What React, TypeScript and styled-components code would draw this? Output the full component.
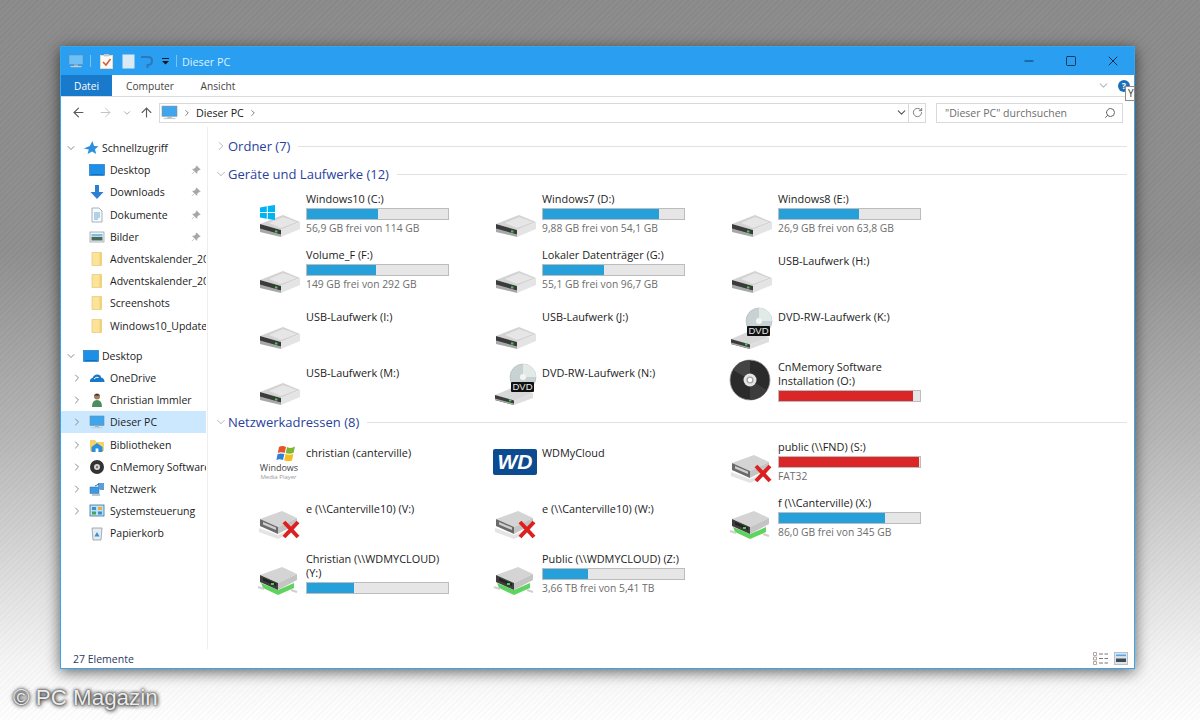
import React from 'react';
import styled, { createGlobalStyle } from 'styled-components';
import { ArrowLeft, ArrowRight, ArrowUp, ChevronDown, ChevronRight, RotateCw, Search, Minus, Square, X } from 'lucide-react';

const GlobalStyle = createGlobalStyle`
  html, body { margin: 0; padding: 0; }
  body { font-family: "Open Sans", "Noto Sans", sans-serif; }
  * { box-sizing: border-box; }
`;

const Page = styled.div`
  position: relative;
  width: 1200px;
  height: 720px;
  overflow: hidden;
  padding: 46px 65px 51px 60px;
  background:
    repeating-linear-gradient(135deg, rgba(255,255,255,.02) 0 2px, rgba(0,0,0,.02) 2px 4px),
    linear-gradient(180deg, #8b8b8b 0%, #8f8f8f 35%, #b4b4b4 60%, #dcdcdc 80%, #f6f6f6 92%, #ffffff 100%);
`;

const Watermark = styled.div`
  position: absolute;
  left: 13px;
  top: 683px;
  font-family: "Liberation Sans", Arial, sans-serif;
  font-size: 22.4px;
  line-height: 30px;
  color: #ececec;
  text-shadow: 0 0 2px #333, 0 0 4px #444, 1px 1px 4px #444;
`;

const Window = styled.div`
  position: relative;
  height: 623px;
  display: flex;
  flex-direction: column;
  background: #fff;
  border: 1px solid #36a6ef;
  box-shadow: 0 3px 14px rgba(0,0,0,.6);
`;

const TitleBar = styled.div`
  height: 28px;
  flex: none;
  display: flex;
  align-items: center;
  background: #2a9ff2;
  padding-left: 6px;
`;

const QuickIcon = styled.span<{ $w: number; $ml?: number }>`
  width: ${p => p.$w}px;
  margin-left: ${p => p.$ml || 0}px;
  display: flex;
  justify-content: center;
  align-items: center;
`;

const TitleSep = styled.span<{ $ml: number; $mr: number }>`
  width: 1px;
  height: 12px;
  background: #7cc3f6;
  margin: 0 ${p => p.$mr}px 0 ${p => p.$ml}px;
`;

const TitleText = styled.span`
  font-size: 10.8px;
  color: #dff1ff;
`;

const WindowButtons = styled.div`
  margin-left: auto;
  display: flex;
  color: #0d1e2e;
`;

const WindowButton = styled.span`
  width: 42px;
  height: 28px;
  display: flex;
  align-items: center;
  justify-content: center;
`;

const TabRow = styled.div`
  height: 22px;
  flex: none;
  display: flex;
  align-items: stretch;
  border-bottom: 1px solid #dadbdc;
  position: relative;
`;

const Tab = styled.div<{ $active?: boolean; $w: number }>`
  width: ${p => p.$w}px;
  display: flex;
  align-items: center;
  justify-content: center;
  font-size: 10.2px;
  background: ${p => (p.$active ? '#1979ca' : 'transparent')};
  color: ${p => (p.$active ? '#ffffff' : '#444444')};
`;

const RibbonRight = styled.div`
  margin-left: auto;
  display: flex;
  align-items: center;
  gap: 8px;
  padding-right: 4px;
  color: #b9b9b9;
`;

const HelpDot = styled.span`
  width: 12px;
  height: 12px;
  border-radius: 50%;
  background: #1b6fb8;
  color: #fff;
  font-size: 9px;
  font-weight: 700;
  line-height: 12px;
  text-align: center;
`;

const Tooltip = styled.div`
  position: absolute;
  right: -1px;
  top: 11px;
  width: 10px;
  height: 15px;
  background: #fbfbfb;
  border: 1px solid #8c8c8c;
  font-size: 10px;
  line-height: 13px;
  padding-left: 2px;
  color: #333;
  overflow: hidden;
`;

const AddressRow = styled.div`
  height: 30px;
  flex: none;
  display: flex;
  align-items: center;
  padding-top: 1px;
`;

const NavButton = styled.span<{ $w: number; $color: string }>`
  width: ${p => p.$w}px;
  display: flex;
  justify-content: center;
  color: ${p => p.$color};
`;

const NavButtons = styled.div`
  display: flex;
  align-items: center;
  padding-left: 3px;
  width: 98px;
`;

const AddressBox = styled.div`
  width: 767px;
  height: 20px;
  display: flex;
  align-items: center;
  border: 1px solid #d9d9d9;
  font-size: 10.7px;
  color: #1a1a1a;
  padding-left: 1px;
`;

const Crumb = styled.span`
  margin: 0 4px;
  display: flex;
  color: #666;
`;

const AddressEnd = styled.span`
  margin-left: auto;
  display: flex;
  align-items: center;
  height: 100%;
  color: #555;
`;

const RefreshCell = styled.span`
  width: 17px;
  height: 100%;
  margin-left: 0;
  display: flex;
  align-items: center;
  justify-content: center;
  border-left: 1px solid #d9d9d9;
  color: #666;
`;

const FlippedSearch = styled(Search)`
  transform: scaleX(-1);
`;

const SearchBox = styled.div`
  width: 187px;
  height: 20px;
  margin-left: 10px;
  display: flex;
  align-items: center;
  justify-content: space-between;
  border: 1px solid #d9d9d9;
  padding: 0 6px 0 8px;
  font-size: 10.5px;
  color: #6d6d6d;
`;

const Main = styled.div`
  flex: 1;
  min-height: 0;
  display: flex;
`;

const Sidebar = styled.nav`
  width: 147px;
  flex: none;
  padding-top: 10px;
  border-right: 1px solid #eeeeee;
  overflow: hidden;
`;

const NavGroup = styled.div`
  margin-bottom: 8px;
`;

const NavRow = styled.div<{ $selected?: boolean; $indent: number }>`
  height: 22.2px;
  width: 145px;
  display: flex;
  align-items: center;
  padding-left: ${p => p.$indent}px;
  font-size: 10.5px;
  color: #1c1c1c;
  white-space: nowrap;
  overflow: hidden;
  background: ${p => (p.$selected ? '#cce8ff' : 'transparent')};
`;

const Twisty = styled.span<{ $w: number }>`
  width: ${p => p.$w}px;
  flex: none;
  display: flex;
  justify-content: center;
  color: #8a8a8a;
`;

const NavIcon = styled.span<{ $ml: number; $mr: number }>`
  width: 16px;
  height: 16px;
  flex: none;
  margin-left: ${p => p.$ml}px;
  margin-right: ${p => p.$mr}px;
  display: flex;
  align-items: center;
  justify-content: center;
`;

const NavLabel = styled.span`
  flex: 1;
  min-width: 0;
  overflow: hidden;
`;

const PinSlot = styled.span`
  width: 16px;
  flex: none;
  margin-right: 2px;
  display: flex;
  justify-content: center;
`;

const Content = styled.main`
  flex: 1;
  min-width: 0;
  padding: 6px 7px 0 6px;
`;

const SectionHeader = styled.div<{ $gap?: number }>`
  height: 24px;
  margin-top: ${p => p.$gap || 0}px;
  display: flex;
  align-items: center;
  font-size: 13px;
  color: #2a3f9e;
  white-space: nowrap;
`;

const SectionChevron = styled.span`
  width: 14px;
  display: flex;
  justify-content: center;
  color: #9a9a9a;
`;

const SectionRule = styled.span`
  flex: 1;
  height: 1px;
  margin-left: 8px;
  background: #e2e2e2;
`;

const TileGrid = styled.div`
  display: grid;
  grid-template-columns: repeat(3, 236px);
  grid-auto-rows: 56px;
  padding-left: 42px;
`;

const Tile = styled.div`
  display: flex;
  align-items: flex-start;
  gap: 2px;
`;

const TileIcon = styled.span`
  width: 48px;
  height: 48px;
  flex: none;
  margin-top: 4px;
  display: block;
`;

const TileBody = styled.div<{ $solo?: boolean }>`
  width: 143px;
  padding-top: ${p => (p.$solo ? 12 : 6)}px;
`;

const TileName = styled.div`
  font-size: 10.9px;
  line-height: 14px;
  color: #1c1c1c;
`;

const TileSub = styled.div`
  margin-top: 1px;
  font-size: 10.3px;
  line-height: 14px;
  color: #6d6d6d;
  white-space: nowrap;
`;

const Bar = styled.div`
  height: 12px;
  margin-top: 2px;
  background: #e6e6e6;
  border: 1px solid #bcbcbc;
`;

const BarFill = styled.div<{ $full?: boolean }>`
  height: 100%;
  background: ${p => (p.$full ? '#da2626' : '#26a0da')};
`;

const StatusBar = styled.div`
  height: 19px;
  flex: none;
  display: flex;
  align-items: center;
  justify-content: space-between;
  padding: 0 6px 0 12px;
  font-size: 10.5px;
  color: #2c3a66;
`;

const ViewIcons = styled.div`
  display: flex;
  gap: 5px;
`;

/* ---- drawings ---- */

const Drive = () => (
  <>
    <path d="M4 34 L27 25 L44 32 L25 40 Z" fill="#d2d2d2" />
    <path d="M13 33 L27 27 L41 32 L25 38 Z" fill="#e6e6e6" />
    <path d="M4 34 L25 40 L25 45 L4 39 Z" fill="#3b3b3b" />
    <path d="M4 38.5 L25 44.5 L25 47 L4 42 Z" fill="#a8a8a8" />
    <path d="M25 40 L44 32 L44 39 L25 47 Z" fill="#e4e4e4" />
    <rect x="19" y="40.5" width="2.4" height="2" fill="#3fd15a" />
  </>
);

const NetDrive = ({ online }: { online: boolean }) => (
  <>
    {online && (
      <>
        <path d="M5 33 L22 40 L38 33 L38 38 L22 45 L7 38 Z" fill="#5fd35f" />
        <path d="M2 37 L8 39 M35 40 L41 42" stroke="#cfcfcf" strokeWidth="2" />
      </>
    )}
    {!online && <path d="M3 34 L22 41 L38 34 L38 38 L22 45 L3 38 Z" fill="#e4e4e4" />}
    <path d="M4 25 L26 17 L41 24 L22 33 Z" fill="#d4d4d4" />
    <path d="M4 25 L22 33 L22 40 L4 32 Z" fill={online ? '#3d3d3d' : '#6a6a6a'} />
    <path d="M7 28 L20 33.5 L20 36 L7 30.5 Z" fill={online ? '#222' : '#cfcfcf'} />
    <path d="M22 33 L41 24 L41 30 L22 40 Z" fill="#c4c4c4" />
    {online && <rect x="15" y="33" width="3" height="2" fill="#3fd15a" />}
    {!online && <path d="M28 28 L42 43 M42 28 L28 43" stroke="#dc2020" strokeWidth="4" />}
  </>
);

const Disc = () => (
  <>
    <circle cx="31" cy="19" r="13" fill="#c9d2d2" />
    <circle cx="31" cy="19" r="13" fill="none" stroke="#aeb6b6" strokeWidth=".6" />
    <path d="M31 6 A13 13 0 0 1 44 19 L31 19 Z" fill="#e2eae8" />
    <circle cx="31" cy="19" r="3" fill="#f4f4f4" />
  </>
);

const TileArt = ({ kind }: { kind: string }) => (
  <svg width="48" height="48" viewBox="0 0 48 48">
    {kind === 'win' && (
      <>
        <Drive />
        <path d="M4 17.5 L10.8 16.3 V22 H4 Z M11.8 16.1 L19 15 V22 H11.8 Z M4 23 H10.8 V28.7 L4 27.5 Z M11.8 23 H19 V30 L11.8 28.9 Z" fill="#00b4f1" />
      </>
    )}
    {kind === 'hdd' && <Drive />}
    {kind === 'dvd' && (
      <>
        <Disc />
        <path d="M3 37 L22 29 L41 35 L22 43 Z" fill="#d8d8d8" />
        <path d="M3 37 L22 42.5 L22 47 L3 42 Z" fill="#3b3b3b" />
        <path d="M3 40.5 L22 45.5 L22 47 L3 42 Z" fill="#a8a8a8" />
        <path d="M22 43 L41 35 L41 40 L22 47 Z" fill="#dedede" />
        <rect x="17" y="41.4" width="2.4" height="2" fill="#3fd15a" />
        <rect x="19" y="24" width="23" height="10" rx="1" fill="#111" />
        <text x="30.5" y="32.3" textAnchor="middle" fontSize="9.5" fill="#e8e8e8" fontFamily="Liberation Sans, Arial, sans-serif">DVD</text>
      </>
    )}
    {kind === 'cd' && (
      <>
        <circle cx="22" cy="22" r="20" fill="#2b2b2b" />
        <circle cx="22" cy="22" r="20" fill="none" stroke="#9a9a9a" strokeWidth=".8" />
        <path d="M22 2 A20 20 0 0 0 5 12 L22 22 Z" fill="#444" />
        <path d="M22 42 A20 20 0 0 0 39 32 L22 22 Z" fill="#3c3c3c" />
        <circle cx="22" cy="22" r="6.5" fill="#e4e4e4" />
        <circle cx="22" cy="22" r="3.6" fill="#a4a4a4" />
        <circle cx="22" cy="22" r="2.2" fill="#fff" />
      </>
    )}
    {kind === 'off' && <NetDrive online={false} />}
    {kind === 'on' && <NetDrive online />}
    {kind === 'wmp' && (
      <>
        <path d="M23 9 Q26 7 30 9 L28.6 15 Q25 13.6 21.8 15 Z" fill="#e8512a" />
        <path d="M31 9 Q35 11 39 8.5 L37.6 14.8 Q33.6 16.6 29.8 15 Z" fill="#7cb82f" />
        <path d="M21.6 16 Q25 14.8 28.4 16 L27 22 Q23.5 20.6 20.4 22 Z" fill="#2f80d8" />
        <path d="M29.6 16 Q33.5 17.6 37.4 16 L36 22.4 Q32 24 28.2 22.2 Z" fill="#f5bd20" />
        <text x="23" y="33" textAnchor="middle" fontSize="9" fill="#444" fontFamily="Open Sans, sans-serif">Windows</text>
        <text x="22.5" y="41" textAnchor="middle" fontSize="6" fill="#9a9a9a" fontFamily="Open Sans, sans-serif">Media Player</text>
      </>
    )}
    {kind === 'wd' && (
      <>
        <rect x="1" y="11" width="44" height="26" rx="2" fill="#0d4b90" />
        <text x="23" y="31" textAnchor="middle" fontSize="21" fontWeight="700" fontStyle="italic" fill="#fff" fontFamily="Liberation Sans, Arial, sans-serif">WD</text>
      </>
    )}
  </svg>
);

const Monitor = ({ size = 16, screen = '#3fa5ec' }: { size?: number; screen?: string }) => (
  <svg width={size} height={size} viewBox="0 0 16 16">
    <rect x="1" y="2" width="14" height="9.5" fill={screen} stroke="#6d8ca6" strokeWidth=".6" />
    <rect x="6" y="11.5" width="4" height="1.6" fill="#a8b4bd" />
    <rect x="2.5" y="13" width="11" height="1.2" fill="#c6cdd2" />
  </svg>
);

const Folder = () => (
  <svg width="16" height="16" viewBox="0 0 16 16">
    <path d="M3 1.5 H12.5 V14.5 H3 Z" fill="#fbe39a" stroke="#e2c264" strokeWidth=".6" />
    <path d="M10.5 1.5 H12.5 V14.5 H10.5 Z" fill="#f2d074" />
  </svg>
);

const NavArt = ({ kind }: { kind: string }) => {
  switch (kind) {
    case 'star':
      return (
        <svg width="16" height="16" viewBox="0 0 16 16">
          <path d="M9.5 1 L11 6 L15.5 6.2 L12 9.2 L13.2 14 L9 11.4 L4.6 14 L5.8 9.6 L.8 8.6 L6.8 6 Z" fill="#2b8fe0" />
        </svg>
      );
    case 'desktop':
      return (
        <svg width="16" height="16" viewBox="0 0 16 16">
          <rect x="0.5" y="2.5" width="15" height="11" fill="#1d8fe6" stroke="#0f6db8" strokeWidth=".6" />
          <rect x="2" y="12" width="12" height=".9" fill="#0f6db8" />
        </svg>
      );
    case 'download':
      return (
        <svg width="16" height="16" viewBox="0 0 16 16">
          <path d="M6 1 H10 V8 H14.5 L8 15 L1.5 8 H6 Z" fill="#2d7fd3" />
        </svg>
      );
    case 'doc':
      return (
        <svg width="16" height="16" viewBox="0 0 16 16">
          <path d="M3 1 H10 L13 4 V15 H3 Z" fill="#f8fbfd" stroke="#8ea0ac" strokeWidth=".8" />
          <path d="M5 6 H11 M5 8 H11 M5 10 H11 M5 12 H9" stroke="#5f9ccb" strokeWidth=".9" />
        </svg>
      );
    case 'pic':
      return (
        <svg width="16" height="16" viewBox="0 0 16 16">
          <rect x="1" y="3" width="14" height="10" fill="#eef3f6" stroke="#8d9aa3" strokeWidth=".7" />
          <rect x="2.5" y="5" width="11" height="2.5" fill="#7fbde6" />
          <rect x="2.5" y="8" width="11" height="3.5" fill="#4d6a55" />
        </svg>
      );
    case 'folder':
      return <Folder />;
    case 'cloud':
      return (
        <svg width="16" height="16" viewBox="0 0 16 16">
          <path d="M1 12 Q.5 8.5 3.5 8 Q5 4 9 4.5 Q12 5 12 7.5 Q15.5 8 15.5 12 Z" fill="#1b78c8" />
          <path d="M5 9 Q7 6.5 9.5 7.5" stroke="#fff" strokeWidth="1" fill="none" />
        </svg>
      );
    case 'user':
      return (
        <svg width="16" height="16" viewBox="0 0 16 16">
          <circle cx="8" cy="4.5" r="3" fill="#a97c58" />
          <path d="M5 3.4 Q8 .2 11 3.4 Z" fill="#3c2e25" />
          <path d="M3 15 Q3 8 8 8 Q13 8 13 15 Z" fill="#4c8e5f" />
        </svg>
      );
    case 'pc':
      return <Monitor />;
    case 'lib':
      return (
        <svg width="16" height="16" viewBox="0 0 16 16">
          <path d="M1 3 H6 L7.5 5 H15 V14 H1 Z" fill="#f6d365" />
          <path d="M8 6 L13.5 10 V15 H2.5 V10 Z" fill="#2b8fe0" />
          <rect x="6.6" y="11.5" width="2.8" height="3.5" fill="#fff" />
        </svg>
      );
    case 'cd':
      return (
        <svg width="16" height="16" viewBox="0 0 16 16">
          <circle cx="8" cy="8" r="7" fill="#333" />
          <circle cx="8" cy="8" r="3" fill="#d8d8d8" />
          <circle cx="8" cy="8" r="1.2" fill="#777" />
        </svg>
      );
    case 'net':
      return (
        <svg width="16" height="16" viewBox="0 0 16 16">
          <rect x="1" y="6" width="9" height="6.5" fill="#3e9ae0" stroke="#2b6ea6" strokeWidth=".5" />
          <path d="M3 14 H11" stroke="#9fb1be" strokeWidth="1.4" />
          <path d="M9 2 H15 V9 H11 L9 6 Z" fill="#5a9fd6" />
          <path d="M6 5 L10 3" stroke="#2b6ea6" strokeWidth="1" />
        </svg>
      );
    case 'cp':
      return (
        <svg width="16" height="16" viewBox="0 0 16 16">
          <rect x="1" y="2" width="14" height="11" fill="#bfe0f5" stroke="#39739f" strokeWidth=".8" />
          <rect x="3" y="4" width="4" height="3" fill="#3a8fd0" />
          <rect x="9" y="4" width="4" height="3" fill="#e2b23c" />
          <rect x="3" y="8.5" width="4" height="3" fill="#4aa35a" />
          <rect x="9" y="8.5" width="4" height="3" fill="#3a8fd0" />
        </svg>
      );
    default:
      return (
        <svg width="16" height="16" viewBox="0 0 16 16">
          <path d="M3 3 H13 L12 15 H4 Z" fill="#e4ecf2" stroke="#8d9aa3" strokeWidth=".8" />
          <path d="M8 7 L10.6 11.5 H5.4 Z" fill="#3a8fd0" />
        </svg>
      );
  }
};

const PinIcon = () => (
  <svg width="10" height="10" viewBox="0 0 10 10">
    <path d="M5.5 .8 L9.2 4.5 L7.8 4.9 L6 6.7 L5.8 8.4 L1.6 4.2 L3.3 4 L5.1 2.2 Z M3 7 L.8 9.2" fill="#a6a6a6" stroke="#a6a6a6" strokeWidth=".6" />
  </svg>
);

const ClipboardIcon = () => (
  <svg width="13" height="15" viewBox="0 0 13 15">
    <rect x=".5" y="1.5" width="12" height="13" fill="#fbfbfb" stroke="#e6d9bc" />
    <rect x="4" y="0" width="5" height="2.4" fill="#c2c8cc" />
    <path d="M3 8 L6 11 L10.5 5" stroke="#e0552b" strokeWidth="1.5" fill="none" />
  </svg>
);

const SheetIcon = () => (
  <svg width="13" height="15" viewBox="0 0 13 15">
    <rect x=".5" y=".5" width="12" height="14" fill="#d9e9f6" />
  </svg>
);

const UndoIcon = () => (
  <svg width="13" height="13" viewBox="0 0 13 13">
    <path d="M1 2 H8 Q12 2 12 6 Q12 10 7.5 10 V13" stroke="#2f78b8" strokeWidth="2" fill="none" />
  </svg>
);

const QuickDrop = () => (
  <svg width="9" height="8" viewBox="0 0 9 8">
    <path d="M1 1 H8 V2 H1 Z M1 4 H8 L4.5 7.5 Z" fill="#0d1a26" />
  </svg>
);

const DetailsView = () => (
  <svg width="16" height="13" viewBox="0 0 16 13">
    <path d="M.5 .5 H3.5 V3.5 H.5 Z M.5 5 H3.5 V8 H.5 Z M.5 9.5 H3.5 V12.5 H.5 Z" fill="#fff" stroke="#b3a79e" />
    <path d="M6 2 H10 M11.5 2 H15 M6 6.5 H10 M11.5 6.5 H15 M6 11 H10 M11.5 11 H15" stroke="#777" />
  </svg>
);

const TilesView = () => (
  <svg width="14" height="13" viewBox="0 0 14 13">
    <rect x=".5" y=".5" width="13" height="12" fill="#dde4ec" stroke="#b4c0cf" />
    <rect x="2" y="2.5" width="10" height="1.6" fill="#5aa6e6" />
    <rect x="2" y="6.5" width="10" height="3.5" fill="#3c4a52" />
  </svg>
);

/* ---- data ---- */

interface NavItem { label: string; art: string; pin?: boolean; expand?: boolean; selected?: boolean; }

const quickItems: NavItem[] = [
  { label: 'Desktop', art: 'desktop', pin: true },
  { label: 'Downloads', art: 'download', pin: true },
  { label: 'Dokumente', art: 'doc', pin: true },
  { label: 'Bilder', art: 'pic', pin: true },
  { label: 'Adventskalender_2015', art: 'folder' },
  { label: 'Adventskalender_2016', art: 'folder' },
  { label: 'Screenshots', art: 'folder' },
  { label: 'Windows10_Update', art: 'folder' },
];

const desktopItems: NavItem[] = [
  { label: 'OneDrive', art: 'cloud', expand: true },
  { label: 'Christian Immler', art: 'user', expand: true },
  { label: 'Dieser PC', art: 'pc', expand: true, selected: true },
  { label: 'Bibliotheken', art: 'lib', expand: true },
  { label: 'CnMemory Software Installation', art: 'cd', expand: true },
  { label: 'Netzwerk', art: 'net', expand: true },
  { label: 'Systemsteuerung', art: 'cp', expand: true },
  { label: 'Papierkorb', art: 'bin' },
];

interface TileItem { name: string; art: string; sub?: string; used?: number; full?: boolean; }

const drives: TileItem[] = [
  { name: 'Windows10 (C:)', art: 'win', used: 50, sub: '56,9 GB frei von 114 GB' },
  { name: 'Windows7 (D:)', art: 'hdd', used: 82, sub: '9,88 GB frei von 54,1 GB' },
  { name: 'Windows8 (E:)', art: 'hdd', used: 57, sub: '26,9 GB frei von 63,8 GB' },
  { name: 'Volume_F (F:)', art: 'hdd', used: 49, sub: '149 GB frei von 292 GB' },
  { name: 'Lokaler Datenträger (G:)', art: 'hdd', used: 43, sub: '55,1 GB frei von 96,7 GB' },
  { name: 'USB-Laufwerk (H:)', art: 'hdd' },
  { name: 'USB-Laufwerk (I:)', art: 'hdd' },
  { name: 'USB-Laufwerk (J:)', art: 'hdd' },
  { name: 'DVD-RW-Laufwerk (K:)', art: 'dvd' },
  { name: 'USB-Laufwerk (M:)', art: 'hdd' },
  { name: 'DVD-RW-Laufwerk (N:)', art: 'dvd' },
  { name: 'CnMemory Software Installation (O:)', art: 'cd', used: 95, full: true },
];

const network: TileItem[] = [
  { name: 'christian (canterville)', art: 'wmp' },
  { name: 'WDMyCloud', art: 'wd' },
  { name: 'public (\\\\FND) (S:)', art: 'off', used: 99, full: true, sub: 'FAT32' },
  { name: 'e (\\\\Canterville10) (V:)', art: 'off' },
  { name: 'e (\\\\Canterville10) (W:)', art: 'off' },
  { name: 'f (\\\\Canterville) (X:)', art: 'on', used: 75, sub: '86,0 GB frei von 345 GB' },
  { name: 'Christian (\\\\WDMYCLOUD) (Y:)', art: 'on', used: 33 },
  { name: 'Public (\\\\WDMYCLOUD) (Z:)', art: 'on', used: 32, sub: '3,66 TB frei von 5,41 TB' },
];

const NavEntry = ({ item }: { item: NavItem }) => (
  <NavRow $indent={8} $selected={item.selected}>
    <Twisty $w={16}>{item.expand && <ChevronRight size={12} />}</Twisty>
    <NavIcon $ml={4} $mr={5}><NavArt kind={item.art} /></NavIcon>
    <NavLabel>{item.label}</NavLabel>
    {item.pin && <PinSlot><PinIcon /></PinSlot>}
  </NavRow>
);

const TileView = ({ item }: { item: TileItem }) => (
  <Tile>
    <TileIcon><TileArt kind={item.art} /></TileIcon>
    <TileBody $solo={item.used === undefined}>
      <TileName>{item.name}</TileName>
      {item.used !== undefined && (
        <Bar><BarFill $full={item.full} style={{ width: `${item.used}%` }} /></Bar>
      )}
      {item.sub && <TileSub>{item.sub}</TileSub>}
    </TileBody>
  </Tile>
);

export default function App() {
  return (
    <Page>
      <GlobalStyle />
      <Window>
        <TitleBar>
          <QuickIcon $w={18}><Monitor screen="#6ec1f7" /></QuickIcon>
          <TitleSep $ml={5} $mr={9} />
          <QuickIcon $w={13}><ClipboardIcon /></QuickIcon>
          <QuickIcon $w={13} $ml={9}><SheetIcon /></QuickIcon>
          <QuickIcon $w={13} $ml={5}><UndoIcon /></QuickIcon>
          <QuickIcon $w={9} $ml={8}><QuickDrop /></QuickIcon>
          <TitleSep $ml={6} $mr={5} />
          <TitleText>Dieser PC</TitleText>
          <WindowButtons>
            <WindowButton><Minus size={14} strokeWidth={1.4} /></WindowButton>
            <WindowButton><Square size={12} strokeWidth={1.5} /></WindowButton>
            <WindowButton><X size={16} strokeWidth={1.3} /></WindowButton>
          </WindowButtons>
        </TitleBar>

        <TabRow>
          <Tab $active $w={51}>Datei</Tab>
          <Tab $w={76}>Computer</Tab>
          <Tab $w={60}>Ansicht</Tab>
          <RibbonRight>
            <ChevronDown size={13} />
            <HelpDot>?</HelpDot>
          </RibbonRight>
          <Tooltip>Y</Tooltip>
        </TabRow>

        <AddressRow>
          <NavButtons>
            <NavButton $w={28} $color="#5a5a5a"><ArrowLeft size={15} strokeWidth={1.8} /></NavButton>
            <NavButton $w={26} $color="#c4c4c4"><ArrowRight size={15} strokeWidth={1.6} /></NavButton>
            <NavButton $w={18} $color="#999"><ChevronDown size={10} strokeWidth={2} /></NavButton>
            <NavButton $w={20} $color="#5a5a5a"><ArrowUp size={15} strokeWidth={1.8} /></NavButton>
          </NavButtons>
          <AddressBox>
            <Monitor size={17} />
            <Crumb><ChevronRight size={10} /></Crumb>
            Dieser PC
            <Crumb><ChevronRight size={10} /></Crumb>
            <AddressEnd>
              <ChevronDown size={13} strokeWidth={2} />
              <RefreshCell><RotateCw size={11} strokeWidth={1.8} /></RefreshCell>
            </AddressEnd>
          </AddressBox>
          <SearchBox>
            "Dieser PC" durchsuchen
            <FlippedSearch size={12} strokeWidth={2} color="#666" />
          </SearchBox>
        </AddressRow>

        <Main>
          <Sidebar>
            <NavGroup>
              <NavRow $indent={2}>
                <Twisty $w={16}><ChevronDown size={12} /></Twisty>
                <NavIcon $ml={4} $mr={3}><NavArt kind="star" /></NavIcon>
                <NavLabel>Schnellzugriff</NavLabel>
              </NavRow>
              {quickItems.map(item => <NavEntry key={item.label} item={item} />)}
            </NavGroup>
            <NavGroup>
              <NavRow $indent={2}>
                <Twisty $w={16}><ChevronDown size={12} /></Twisty>
                <NavIcon $ml={4} $mr={3}><NavArt kind="desktop" /></NavIcon>
                <NavLabel>Desktop</NavLabel>
              </NavRow>
              {desktopItems.map(item => <NavEntry key={item.label} item={item} />)}
            </NavGroup>
          </Sidebar>

          <Content>
            <SectionHeader $gap={1}>
              <SectionChevron><ChevronRight size={14} strokeWidth={1.2} /></SectionChevron>
              Ordner (7)
              <SectionRule />
            </SectionHeader>
            <SectionHeader $gap={4}>
              <SectionChevron><ChevronDown size={14} strokeWidth={1.2} /></SectionChevron>
              Geräte und Laufwerke (12)
              <SectionRule />
            </SectionHeader>
            <TileGrid>
              {drives.map(d => <TileView key={d.name} item={d} />)}
            </TileGrid>
            <SectionHeader>
              <SectionChevron><ChevronDown size={14} strokeWidth={1.2} /></SectionChevron>
              Netzwerkadressen (8)
              <SectionRule />
            </SectionHeader>
            <TileGrid>
              {network.map(d => <TileView key={d.name} item={d} />)}
            </TileGrid>
          </Content>
        </Main>

        <StatusBar>
          27 Elemente
          <ViewIcons><DetailsView /><TilesView /></ViewIcons>
        </StatusBar>
      </Window>
      <Watermark>© PC Magazin</Watermark>
    </Page>
  );
}
